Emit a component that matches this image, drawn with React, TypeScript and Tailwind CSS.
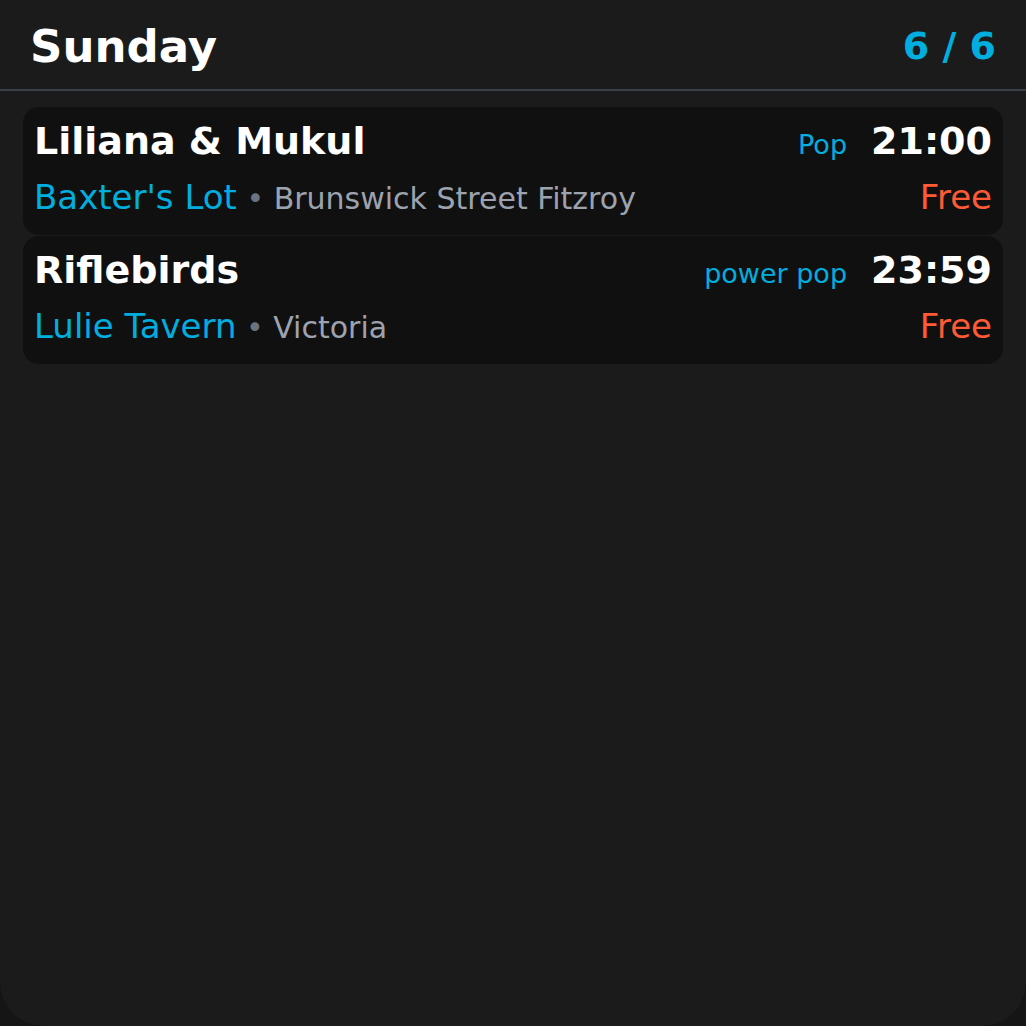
const font = "font-['DejaVu_Sans',sans-serif]";

type Gig = {
  artist: string;
  genre: string;
  time: string;
  venue: string;
  place: string;
  price: string;
};

const gigs: Gig[] = [
  {
    artist: "Liliana & Mukul",
    genre: "Pop",
    time: "21:00",
    venue: "Baxter's Lot",
    place: "Brunswick Street Fitzroy",
    price: "Free",
  },
  {
    artist: "Riflebirds",
    genre: "power pop",
    time: "23:59",
    venue: "Lulie Tavern",
    place: "Victoria",
    price: "Free",
  },
];

function GigCard({ gig }: { gig: Gig }) {
  return (
    <div className="h-[128px] rounded-2xl bg-[#101010] pl-[11px] pr-[11px] pt-3">
      <div className="flex items-baseline justify-between leading-[44px]">
        <span className="text-[38px] font-bold text-white">{gig.artist}</span>
        <div className="flex items-baseline gap-[24px]">
          <span className="text-[27px] text-[#00aedf]">{gig.genre}</span>
          <span className="text-[38px] font-bold text-white">{gig.time}</span>
        </div>
      </div>
      <div className="mt-[10px] flex items-baseline justify-between leading-[40px]">
        <div className="flex items-baseline">
          <span className="text-[34px] text-[#00aedf]">{gig.venue}</span>
          <span className="whitespace-pre text-[30px] text-[#6b7280]"> • </span>
          <span className="text-[30px] text-[#9ca3af]">{gig.place}</span>
        </div>
        <span className="text-[34px] text-[#ff5a36]">{gig.price}</span>
      </div>
    </div>
  );
}

export default function App() {
  return (
    <div className={`h-[1026px] w-[1026px] bg-[#151515] ${font}`}>
      <div className="flex h-full flex-col rounded-b-[44px] bg-[#1b1b1b]">
        <div className="flex h-[91px] items-center justify-between border-b-2 border-[#3b404b] px-[30px] pt-[4px]">
          <h1 className="text-[45px] font-bold text-white">Sunday</h1>
          <span className="text-[38px] font-bold text-[#00aedf]">6 / 6</span>
        </div>
        <div className="mx-[23px] mt-[16px] flex flex-col gap-[1px]">
          {gigs.map((g) => (
            <GigCard key={g.artist} gig={g} />
          ))}
        </div>
      </div>
    </div>
  );
}
